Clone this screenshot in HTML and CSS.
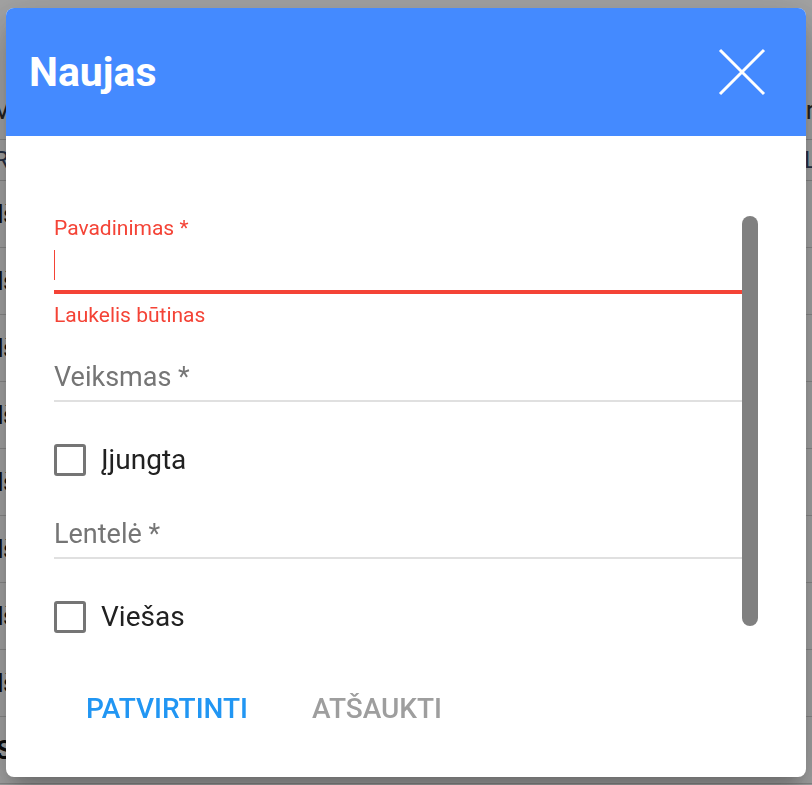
FILE: index.html
```html
<!DOCTYPE html>
<html lang="lt">
<head>
<meta charset="utf-8">
<title>Naujas</title>
<link rel="stylesheet" href="styles.css">
</head>
<body>
<div class="page">
  <div class="table-head">
    <span class="cell-left">Vardas</span>
    <span class="cell-right">Parametr</span>
  </div>
  <div class="table-sub">
    <span class="cell-left sub">Rezultatas</span>
    <span class="cell-right sub">Lentele</span>
  </div>
  <div class="rows">
    <div class="row"><span class="cell-left">Iš</span></div>
    <div class="row"><span class="cell-left">Iš</span></div>
    <div class="row"><span class="cell-left">Iš</span></div>
    <div class="row"><span class="cell-left">Iš</span></div>
    <div class="row"><span class="cell-left">Iš</span></div>
    <div class="row"><span class="cell-left">Iš</span></div>
    <div class="row"><span class="cell-left">Iš</span></div>
    <div class="row"><span class="cell-left">Iš</span></div>
    <div class="row"><span class="cell-left">Se</span></div>
  </div>
</div>

<div class="backdrop"></div>

<div class="dialog" role="dialog">
  <div class="dialog-header">
    <h1 class="dialog-title">Naujas</h1>
    <button class="close-btn" aria-label="Uždaryti">
      <svg viewBox="0 0 48 48" width="48" height="48"><path d="M2 2L46 46M46 2L2 46" stroke="#fff" stroke-width="3" fill="none"/></svg>
    </button>
  </div>
  <div class="dialog-body">
    <div class="scroll-area">
      <div class="form">
        <div class="field field-error">
          <div class="float-label">Pavadinimas *</div>
          <div class="input-line"><span class="caret"></span></div>
          <div class="error-text">Laukelis būtinas</div>
        </div>
        <div class="field field-plain">
          <div class="placeholder">Veiksmas *</div>
        </div>
        <label class="check-row">
          <span class="check-box"></span>
          <span class="check-label">Įjungta</span>
        </label>
        <div class="field field-plain field-second">
          <div class="placeholder">Lentelė *</div>
        </div>
        <label class="check-row">
          <span class="check-box"></span>
          <span class="check-label">Viešas</span>
        </label>
      </div>
      <div class="scrollbar"><div class="thumb"></div></div>
    </div>
    <div class="actions">
      <button class="btn btn-primary">PATVIRTINTI</button>
      <button class="btn btn-muted">ATŠAUKTI</button>
    </div>
  </div>
</div>
</body>
</html>
```

FILE: styles.css
```css
* { box-sizing: border-box; }
html, body { margin: 0; padding: 0; }
body {
  width: 812px;
  height: 785px;
  overflow: hidden;
  background: #fff;
  font-family: Roboto, "Noto Sans", sans-serif;
}

/* background table behind the modal */
.page { width: 812px; padding-top: 80px; }
.table-head {
  height: 60px;
  display: flex;
  justify-content: space-between;
  align-items: center;
  border-bottom: 1px solid #d0d0d0;
  font-size: 26px;
  color: #333;
  overflow: hidden;
}
.table-sub {
  height: 41px;
  display: flex;
  justify-content: space-between;
  align-items: center;
  border-bottom: 1px solid #d0d0d0;
  font-size: 24px;
  color: #3a4a6a;
  overflow: hidden;
}
.cell-left { margin-left: -6px; }
.cell-right { margin-right: -70px; }
.rows { display: flex; flex-direction: column; }
.row {
  height: 67px;
  display: flex;
  align-items: center;
  border-bottom: 1px solid #d6d6d6;
  font-size: 26px;
  color: #111;
  font-weight: 700;
  overflow: hidden;
}
.row .cell-left { margin-left: -4px; }

.backdrop {
  position: fixed;
  inset: 0;
  background: rgba(0, 0, 0, 0.36);
}

/* dialog */
.dialog {
  position: fixed;
  left: 6px;
  top: 8px;
  width: 800px;
  height: 769px;
  background: #fff;
  border-radius: 8px;
  overflow: hidden;
  box-shadow: 0 11px 15px -7px rgba(0,0,0,.2), 0 24px 38px 3px rgba(0,0,0,.14), 0 9px 46px 8px rgba(0,0,0,.12);
  display: flex;
  flex-direction: column;
}
.dialog-header {
  height: 128px;
  flex: none;
  background: #448aff;
  display: flex;
  align-items: center;
  justify-content: space-between;
  padding: 0 40px 0 23px;
}
.dialog-title {
  margin: 0;
  color: #fff;
  font-size: 41px;
  font-weight: 700;
  line-height: 48px;
}
.close-btn {
  border: 0;
  background: transparent;
  padding: 0;
  width: 48px;
  height: 48px;
  display: block;
}
.close-btn svg { display: block; }

.dialog-body {
  padding: 80px 48px 0 48px;
  flex: 1;
  display: flex;
  flex-direction: column;
}
.scroll-area {
  display: flex;
  align-items: flex-start;
}
.form { flex: 1; }
.scrollbar {
  width: 16px;
  flex: none;
}
.thumb {
  height: 410px;
  background: #808080;
  border-radius: 8px;
}

.float-label {
  font-size: 21px;
  line-height: 24px;
  color: #f44336;
}
.input-line {
  height: 54px;
  padding-top: 10px;
  border-bottom: 4px solid #f44336;
}
.caret {
  display: block;
  width: 1px;
  height: 30px;
  background: #f44336;
}
.error-text {
  margin-top: 9px;
  font-size: 21px;
  line-height: 24px;
  color: #f44336;
}

.field-plain {
  margin-top: 34px;
  padding-bottom: 7px;
  border-bottom: 2px solid #e0e0e0;
}
.field-second { margin-top: 42px; }
.placeholder {
  font-size: 27px;
  line-height: 32px;
  color: #757575;
}

.check-row {
  margin-top: 42px;
  display: flex;
  align-items: center;
  gap: 15px;
  height: 32px;
}
.check-box {
  width: 32px;
  height: 32px;
  border: 3px solid #757575;
  border-radius: 3px;
  flex: none;
}
.check-label {
  font-size: 28px;
  line-height: 32px;
  color: #212121;
}

.actions {
  margin-top: 58px;
  display: flex;
}
.btn {
  border: 0;
  background: transparent;
  font-family: Roboto, sans-serif;
  font-size: 28px;
  line-height: 36px;
  font-weight: 500;
  padding: 0 32px;
}
.btn-primary { color: #2196f3; }
.btn-muted { color: #9e9e9e; }
```
